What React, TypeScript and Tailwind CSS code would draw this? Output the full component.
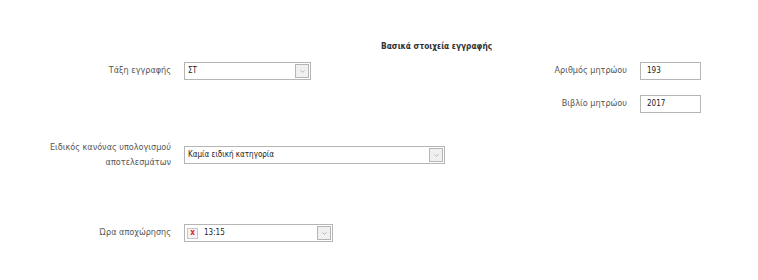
import { ChevronDown } from 'lucide-react'

function SelectBox({ value, width, clearable = false }: { value: string; width: string; clearable?: boolean }) {
  return (
    <div className={`flex h-[18px] items-center border border-[#b5b5b5] bg-white ${width}`}>
      {clearable && (
        <span className="ml-[2px] flex h-[11px] w-[11px] items-center justify-center border border-[#c8c8c8] bg-[#f4f4f4] text-[8px] font-bold leading-none text-[#e0262b]">
          x
        </span>
      )}
      <span className={`flex-1 truncate text-[8px] text-[#222] ${clearable ? 'pl-[6px]' : 'pl-[3px]'}`}>{value}</span>
      <span className="mr-[1px] flex h-[14px] w-[14px] items-center justify-center border border-[#b5b5b5] bg-[#f0f0f0]">
        <ChevronDown className="h-[7px] w-[7px] text-[#8a8a8a]" strokeWidth={2} />
      </span>
    </div>
  )
}

function TextBox({ value }: { value: string }) {
  return (
    <div className="flex h-[18px] w-[61px] items-center border border-[#b5b5b5] bg-white pl-[6px] text-[8px] text-[#222]">
      {value}
    </div>
  )
}

export default function App() {
  return (
    <div className="h-[280px] w-[758px] bg-white font-['DejaVu_Sans_Condensed','DejaVu_Sans',sans-serif] text-[9px] text-[#555]">
      <div className="pl-[381px] pt-[40px] text-[8.3px] font-bold leading-[12px] text-[#333]">
        Βασικά στοιχεία εγγραφής
      </div>

      <div className="mt-[10px] flex justify-between pr-[57px]">
        {/* left column, first row */}
        <div className="flex h-[18px] items-center">
          <div className="w-[171px] text-right">Τάξη εγγραφής</div>
          <div className="ml-[13px]">
            <SelectBox value="ΣΤ" width="w-[127px]" />
          </div>
        </div>

        {/* right column */}
        <div className="flex flex-col items-end gap-[15px]">
          <div className="flex items-center gap-[13px]">
            <span>Αριθμός μητρώου</span>
            <TextBox value="193" />
          </div>
          <div className="flex items-center gap-[13px]">
            <span>Βιβλίο μητρώου</span>
            <TextBox value="2017" />
          </div>
        </div>
      </div>

      <div className="mt-[27px] flex items-center">
        <div className="w-[171px] text-right leading-[15px]">
          Ειδικός κανόνας υπολογισμού
          <br />
          αποτελεσμάτων
        </div>
        <div className="ml-[13px]">
          <SelectBox value="Καμία ειδική κατηγορία" width="w-[261px]" />
        </div>
      </div>

      <div className="mt-[54px] flex h-[18px] items-center">
        <div className="w-[171px] text-right">Ώρα αποχώρησης</div>
        <div className="ml-[13px]">
          <SelectBox value="13:15" width="w-[149px]" clearable />
        </div>
      </div>
    </div>
  )
}
